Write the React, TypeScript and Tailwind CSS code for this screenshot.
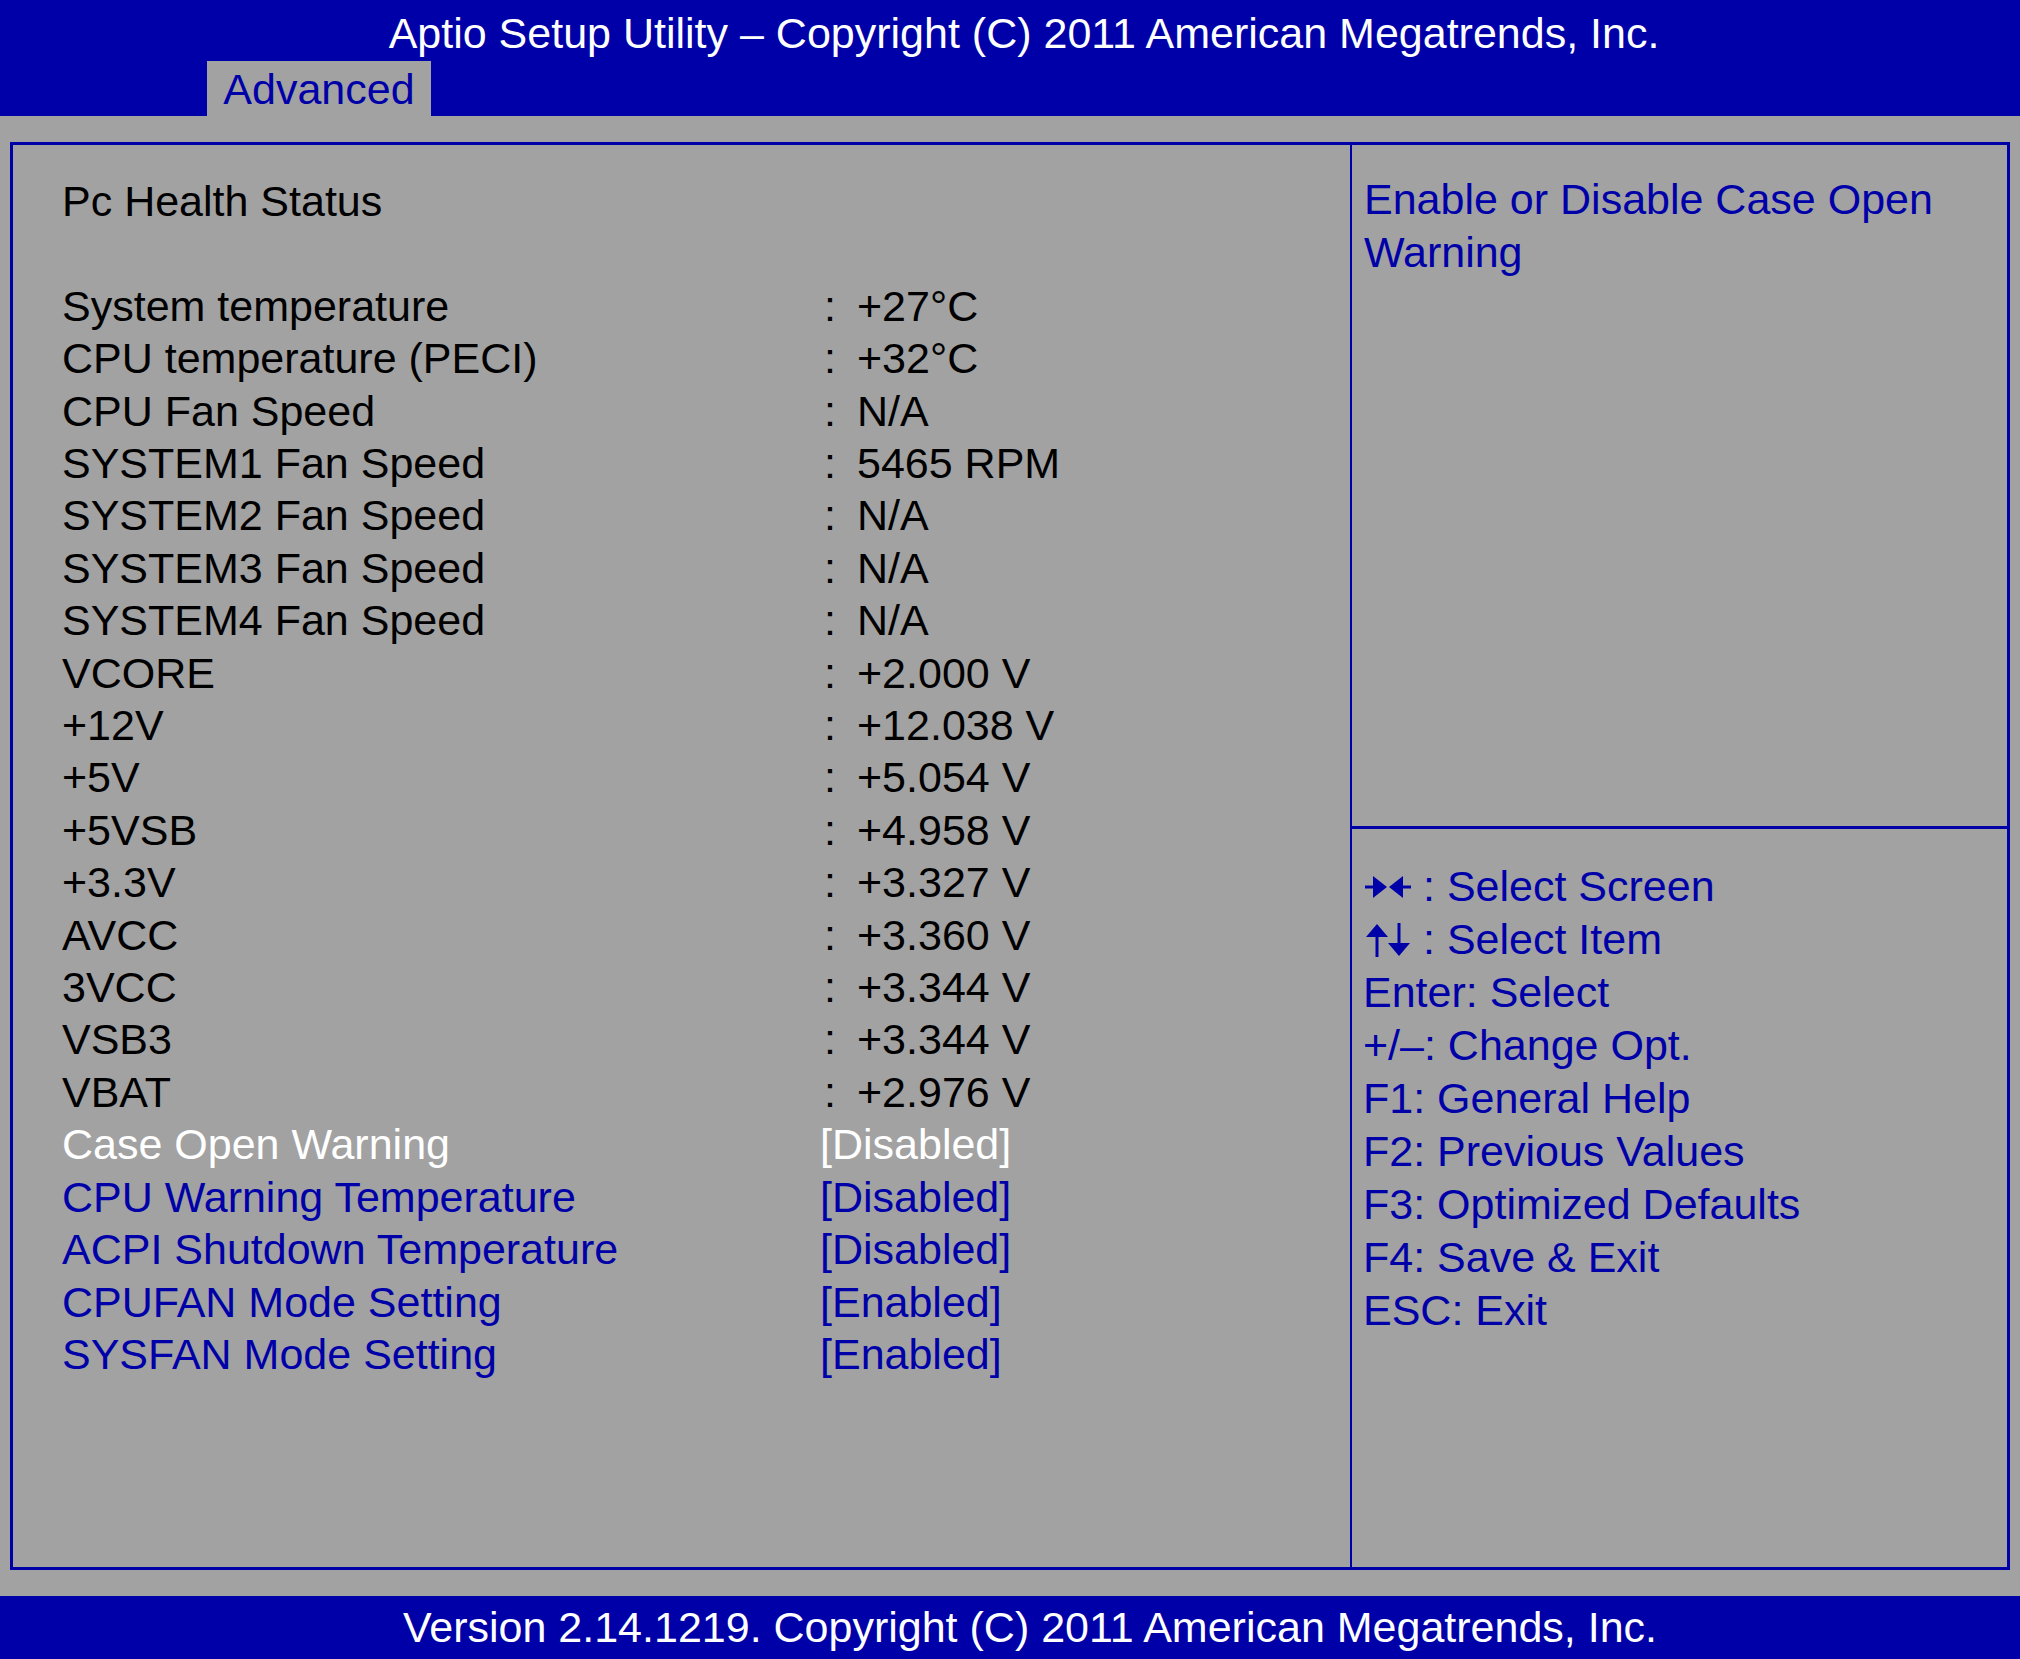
const BLUE = "text-[#0000a8]";

const rows: [string, string][] = [
  ["System temperature", "+27°C"],
  ["CPU temperature (PECI)", "+32°C"],
  ["CPU Fan Speed", "N/A"],
  ["SYSTEM1 Fan Speed", "5465 RPM"],
  ["SYSTEM2 Fan Speed", "N/A"],
  ["SYSTEM3 Fan Speed", "N/A"],
  ["SYSTEM4 Fan Speed", "N/A"],
  ["VCORE", "+2.000 V"],
  ["+12V", "+12.038 V"],
  ["+5V", "+5.054 V"],
  ["+5VSB", "+4.958 V"],
  ["+3.3V", "+3.327 V"],
  ["AVCC", "+3.360 V"],
  ["3VCC", "+3.344 V"],
  ["VSB3", "+3.344 V"],
  ["VBAT", "+2.976 V"],
];

const settings: [string, string, boolean][] = [
  ["Case Open Warning", "[Disabled]", true],
  ["CPU Warning Temperature", "[Disabled]", false],
  ["ACPI Shutdown Temperature", "[Disabled]", false],
  ["CPUFAN Mode Setting", "[Enabled]", false],
  ["SYSFAN Mode Setting", "[Enabled]", false],
];

const keys = [
  "Enter: Select",
  "+/\u2013: Change Opt.",
  "F1: General Help",
  "F2: Previous Values",
  "F3: Optimized Defaults",
  "F4: Save & Exit",
  "ESC: Exit",
];

const LeftRight = () => (
  <svg width="50" height="26" viewBox="0 0 50 26" className="inline-block mr-[10px]">
    <path d="M2 13h14" stroke="#0000a8" strokeWidth="3" />
    <path d="M10 2l14 11-14 11z" fill="#0000a8" />
    <path d="M48 13h-14" stroke="#0000a8" strokeWidth="3" />
    <path d="M40 2l-14 11 14 11z" fill="#0000a8" />
  </svg>
);

const UpDown = () => (
  <svg width="50" height="34" viewBox="0 0 50 34" className="inline-block mr-[10px]">
    <path d="M14 34V10" stroke="#0000a8" strokeWidth="3" />
    <path d="M3 14L14 1l11 13z" fill="#0000a8" />
    <path d="M36 0v24" stroke="#0000a8" strokeWidth="3" />
    <path d="M25 20l11 13 11-13z" fill="#0000a8" />
  </svg>
);

export default function App() {
  return (
    <div
      className="w-[2020px] h-[1659px] bg-[#a2a2a2] flex flex-col text-[43px]"
      style={{ fontFamily: '"Liberation Sans", Arial, sans-serif' }}
    >
      <div className="h-[116px] bg-[#0000a8] flex flex-col">
        <div className="h-[61px] text-white text-center leading-[66px] pl-[28px]">
          Aptio Setup Utility – Copyright (C) 2011 American Megatrends, Inc.
        </div>
        <div className="pl-[207px] flex-1 flex">
          <div className={`w-[224px] bg-[#a2a2a2] ${BLUE} text-center leading-[57px]`}>Advanced</div>
        </div>
      </div>

      <div className="flex-1 px-[10px] pt-[26px] pb-[26px]">
        <div className="h-full border-[3px] border-[#0000a8] flex">
          <div className="w-[1339px] border-r-[2px] border-[#0000a8] pl-[49px] pt-[30px] leading-[52.4px]">
            <div className="text-black">Pc Health Status</div>
            <div className="h-[52.4px]" />
            {rows.map(([l, v]) => (
              <div key={l} className="flex text-black">
                <div className="w-[762px]">{l}</div>
                <div className="w-[33px]">:</div>
                <div>{v}</div>
              </div>
            ))}
            {settings.map(([l, v, sel]) => (
              <div key={l} className={`flex ${sel ? "text-white" : BLUE}`}>
                <div className="w-[758px]">{l}</div>
                <div>{v}</div>
              </div>
            ))}
          </div>
          <div className="flex-1 flex flex-col">
            <div className={`h-[684px] border-b-[3px] border-[#0000a8] pl-[12px] pt-[28px] leading-[53px] ${BLUE}`}>
              Enable or Disable Case Open
              <br />
              Warning
            </div>
            <div className={`flex-1 pl-[11px] pt-[31px] leading-[53px] ${BLUE}`}>
              <div className="flex items-center"><LeftRight />: Select Screen</div>
              <div className="flex items-center"><UpDown />: Select Item</div>
              {keys.map((k) => (
                <div key={k}>{k}</div>
              ))}
            </div>
          </div>
        </div>
      </div>

      <div className="h-[63px] bg-[#0000a8] text-white text-center leading-[63px] pl-[40px]">
        Version 2.14.1219. Copyright (C) 2011 American Megatrends, Inc.
      </div>
    </div>
  );
}
